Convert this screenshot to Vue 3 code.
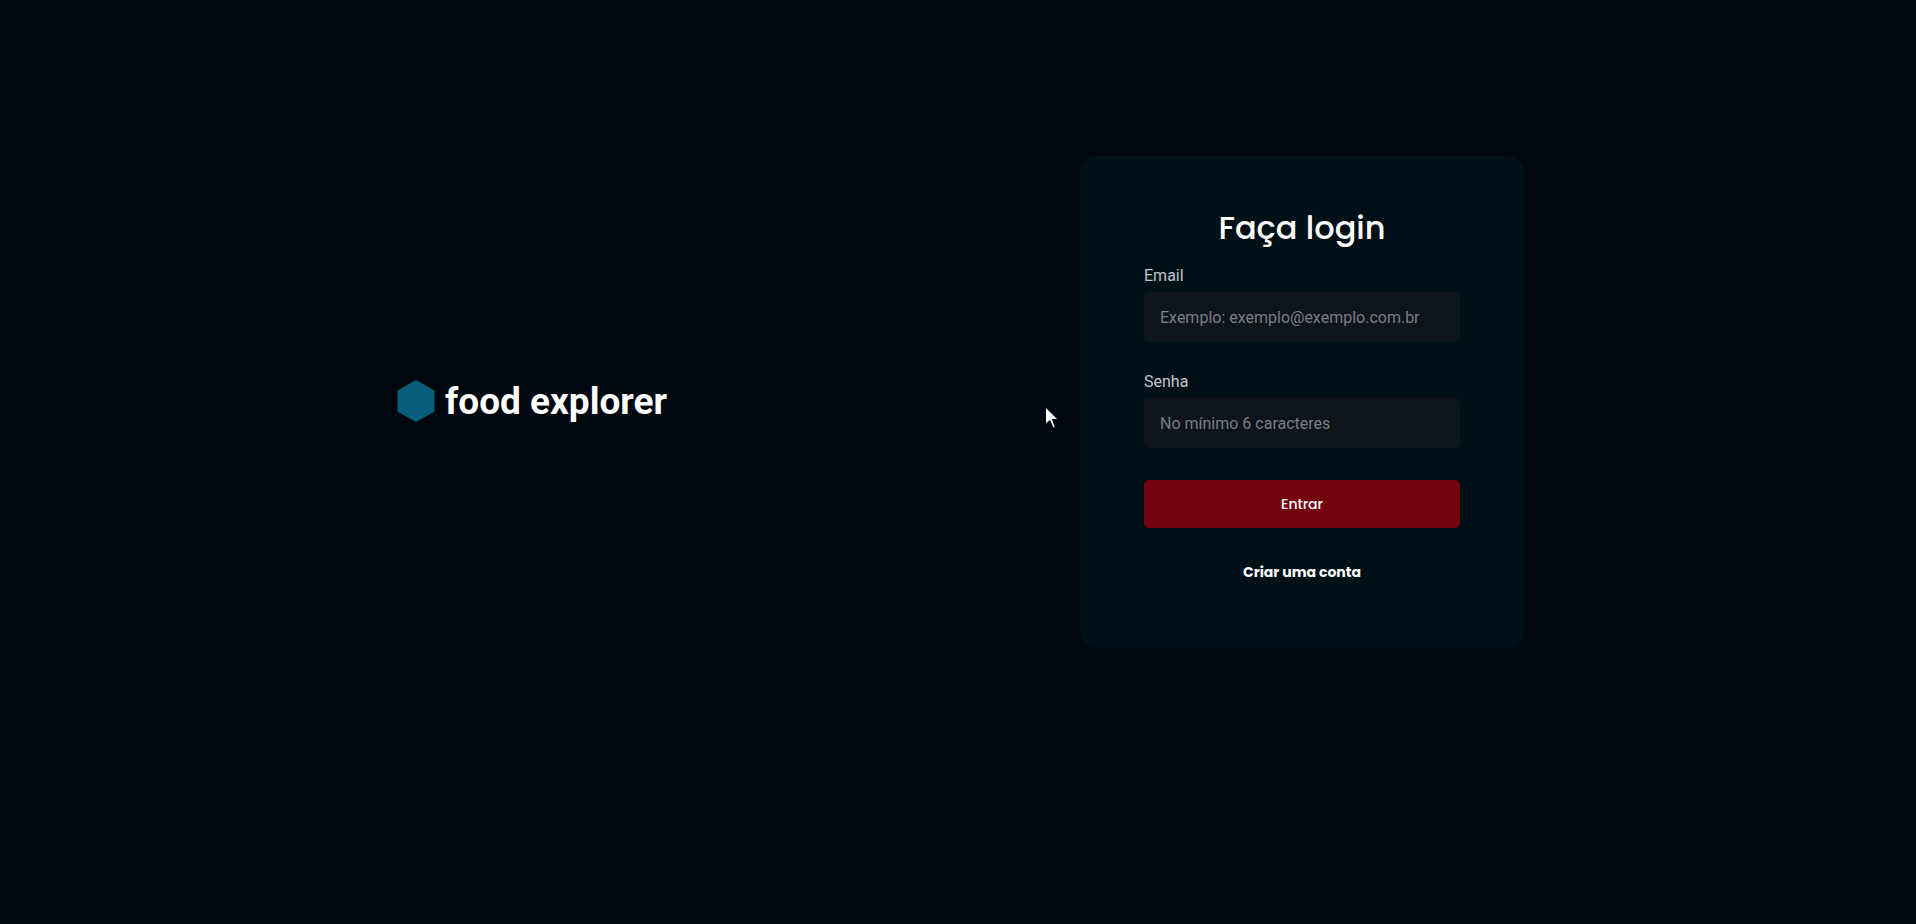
<script setup>
import { ref } from 'vue'

const email = ref('')
const password = ref('')
</script>

<template>
  <main class="page">
    <div class="content">
      <h1 class="brand">
        <svg class="brand-mark" viewBox="0 0 38 42" aria-hidden="true">
          <path d="M19 0 37.5 10.5v21L19 42 .5 31.5v-21z" fill="#065e7c" />
        </svg>
        <span>food explorer</span>
      </h1>

      <form class="card" @submit.prevent>
        <h2 class="title">Faça login</h2>

        <div class="field">
          <label for="email">Email</label>
          <input id="email" v-model="email" type="email" placeholder="Exemplo: exemplo@exemplo.com.br" />
        </div>

        <div class="field">
          <label for="password">Senha</label>
          <input id="password" v-model="password" type="password" placeholder="No mínimo 6 caracteres" />
        </div>

        <button class="submit" type="submit">Entrar</button>
        <a class="register" href="#register">Criar uma conta</a>
      </form>
    </div>

    <svg class="pointer" viewBox="0 0 12 20" aria-hidden="true">
      <path d="M1 0v15l4-3 3.5 7.5 1.2-.6L6.8 11H12z" fill="#fff" />
    </svg>
  </main>
</template>

<style>
body {
  background: #00070e;
}
</style>

<style scoped>
.page {
  position: relative;
  box-sizing: border-box;
  min-height: 100vh;
  padding: 156px 24px 24px;
  background: #00070e;
  color: #fff;
  font-family: Roboto, sans-serif;
}

.content {
  display: flex;
  flex-wrap: wrap;
  align-items: center;
  justify-content: space-between;
  gap: 48px;
  max-width: 1132px;
  margin: 0 auto;
}

.brand {
  display: flex;
  align-items: flex-start;
  gap: 10px;
  margin: 0;
  padding-left: 5px;
  font-size: 37px;
  font-weight: 700;
  line-height: 44px;
}

.brand-mark {
  width: 38px;
  height: 42px;
}

.card {
  box-sizing: border-box;
  display: flex;
  flex-direction: column;
  width: 444px;
  max-width: 100%;
  padding: 48px 64px 64px;
  border-radius: 16px;
  background: #001017;
}

.title {
  margin: 0 0 16px;
  font-family: Poppins, Inter, sans-serif;
  font-size: 32px;
  font-weight: 500;
  line-height: 48px;
  text-align: center;
}

.field {
  display: flex;
  flex-direction: column;
  gap: 8px;
  margin-bottom: 32px;
}

.field label {
  color: #c4c4cc;
  font-size: 16px;
  line-height: 16px;
}

.field input {
  box-sizing: border-box;
  width: 100%;
  height: 50px;
  padding: 0 16px;
  border: 0;
  border-radius: 5px;
  background: #0d151b;
  color: #fff;
  font-family: Roboto, sans-serif;
  font-size: 16px;
}

.field input::placeholder {
  color: #7c7c8a;
  opacity: 1;
}

.submit {
  height: 48px;
  padding: 0;
  border: 0;
  border-radius: 5px;
  background: #73020d;
  color: #fff;
  font-family: Poppins, Inter, sans-serif;
  font-size: 14px;
  font-weight: 500;
  cursor: pointer;
}

.register {
  align-self: center;
  margin-top: 32px;
  color: #fff;
  font-family: Poppins, Inter, sans-serif;
  font-size: 14px;
  font-weight: 700;
  line-height: 24px;
  text-decoration: none;
}

.pointer {
  position: absolute;
  top: 408px;
  left: 1045px;
  width: 12px;
  height: 20px;
  pointer-events: none;
}
</style>
